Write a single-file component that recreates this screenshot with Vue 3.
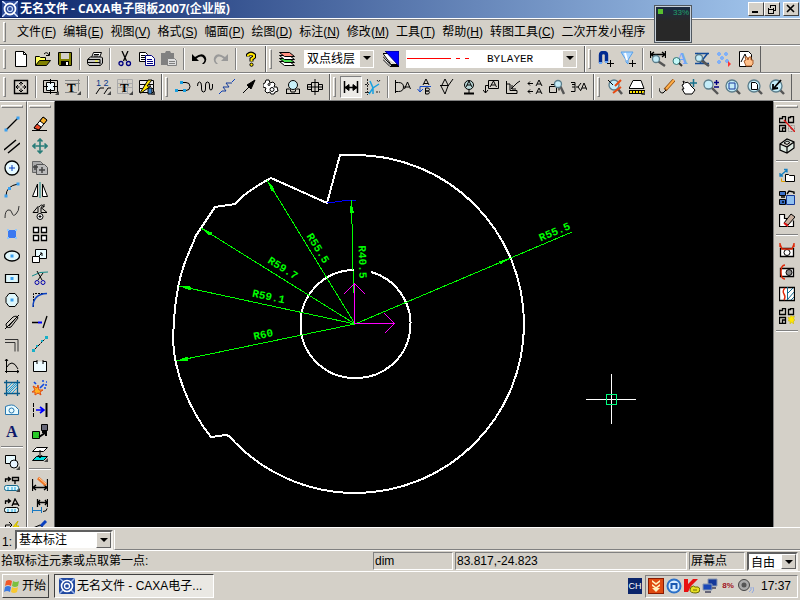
<script setup>
import { ref } from 'vue'

const menus = [
  ['文件', 'F'], ['编辑', 'E'], ['视图', 'V'], ['格式', 'S'], ['幅面', 'P'], ['绘图', 'D'],
  ['标注', 'N'], ['修改', 'M'], ['工具', 'T'], ['帮助', 'H'], ['转图工具', 'C'], ['二次开发小程序', '']
]

const layer = ref('双点线层')
const lineType = ref('BYLAYER')
const dimMode = ref('基本标注')
const snap = ref('自由')

const lens = (x, y, r, inner = '') =>
  `<path d="M${x + r * 0.7} ${y + r * 0.7}L15 15" stroke="#555" stroke-width="2.4"/><circle cx="${x}" cy="${y}" r="${r}" fill="#c4ecf8" stroke="#5a7c8a" stroke-width="1.3"/>${inner}`
const corner = '<path d="M16 12v4h-4z" fill="#444" stroke="none"/>'
const spark = '<path d="M12 7.500l-1 2.500-2-1 1 3-1 1 2 0 0 3 1.500-2 2 2 0-3 1.500-1-1.500-1 1-3-2 1z" fill="#ffe600" stroke="#c8b400" stroke-width=".5"/>'
const boxes = '<path d="M.5 6.500v-4h3v-2h3v6zM.5 15.500v-6h6v6zM3.500 15v-3h3M9.500 6.500v-5h2v-1h3v6z" stroke-width="1.300"/>'
const letter = (t, x, y, s, c) =>
  `<text x="${x}" y="${y}" font-family="Liberation Serif, serif" font-weight="bold" font-size="${s}" fill="${c}" stroke="none">${t}</text>`

const icons = {
  'New': '<path d="M2.500.500h8l3 3v12h-11z" fill="#fff"/><path d="M10.500.500v3h3"/>',
  'Open': '<path d="M.5 14.500v-9h4l1 1h5v3" fill="#ffff60"/><path d="M.5 14.500l4-5h11l-4 5z" fill="#808000"/><path d="M9 3q3-3 5 1M14.500 1v3.500H11"/>',
  'Save': '<path d="M1.500 1.500h13v13h-12l-1-1z" fill="#808000"/><path d="M4 2h8v6H4z" fill="#d4d0c8" stroke="none"/><path d="M4 10h8v5H4z" fill="#000" stroke="none"/><path d="M9 11h2v3H9z" fill="#fff" stroke="none"/>',
  'Print': '<path d="M4.500 6.500l2-5h8l-2 5z" fill="#fff"/><path d="M7 3.500h5M6.500 5h5"/><path d="M.5 8.500l3-2.500h11l1 1v5l-2 2.500H2l-1.500-2z" fill="#c8c8c8"/><path d="M1 8.500h12v5M1 11.500h12"/><path d="M8 10h3" stroke="#ff0"/>',
  'Cut': '<path d="M5 0l4.500 10M11 0L6.500 10" stroke-width="1.3"/><circle cx="4" cy="12.500" r="2" stroke="#000080" stroke-width="1.3"/><circle cx="11.500" cy="12.500" r="2" stroke="#000080" stroke-width="1.3"/>',
  'Copy': '<path d="M.5 1.500h6l2 2v7h-8z" fill="#fff"/><path d="M2 4.500h4M2 6.500h4M2 8.500h4"/><path d="M6.500 4.500h6l3 3v7h-9z" fill="#fff" stroke="#000080"/><path d="M8 8.500h5M8 10.500h6M8 12.500h6" stroke="#000080"/>',
  'Paste': '<path d="M0 2h4l1-2h4l1 2h3v12H0z" fill="#808080" stroke="none"/><path d="M6.500 7.500h7l2 2v5h-9z" fill="#ddd" stroke="#808080"/><path d="M8 10.500h6M8 12.500h6" stroke="#808080"/>',
  'Undo': '<path d="M1 3v7h7L5.500 7.500Q10 4 12.500 7T11 13h2Q17 9 14 5T4 6z" fill="#000" stroke="none"/>',
  'Redo': '<path d="M15 3v7H8l2.500-2.500Q6 4 3.500 7T5 13H3Q-1 9 2 5t10 1z" fill="#999" stroke="none"/>',
  'Help': '<path d="M5 5.500V4Q8 1 11 4v2L8.500 8v2.500" stroke-width="4"/><path d="M5 5.200V4.200Q8 1.500 11 4.200V6L8.500 8v2.200" stroke="#ffe600" stroke-width="2"/><circle cx="8.500" cy="13.700" r="1.600" fill="#ffe600"/>',
  'Layers': '<path d="M.5 10.500h10l5 4h-10z" fill="#fff"/><path d="M.5 7.500h10l5 4h-10z" fill="#4ade50"/><path d="M.5 4.500h10l5 4h-10z" fill="#fff"/><path d="M.5 1.500h10l5 4h-10z" fill="#ff9080"/>',
  'Colour': '<path d="M0 2.500h8l8 11H8zM0 5.500l8 9h8M0 8.500l7 7h9" fill="#fff"/><path d="M2 0h14v15z" fill="#0000ff" stroke="#000080"/>',
  'Snap magnet': '<path d="M2.500 12V4Q2.500 1.500 5.500 1.500t3 2.500v7" stroke="#002a90" stroke-width="3.400"/><path d="M1 12h3M7 11h3" stroke="#6aa8f8" stroke-width="2"/><path d="M9 12.500h7M12.500 9v7"/>',
  'Filter point': '<path d="M1 1h12L8 9v4L6 11V9z" fill="#a8d4ff" stroke="#58a0e8"/><path d="M5 2l2 7" stroke="#fff" stroke-width="2"/><path d="M9 12.500h7M12.500 9v7"/>',
  'Find dimension': '<path d="M.5 0v7M15.500 0v7M1 3.500h14M4 1L1 3.500 4 6M12 1l3 2.500L12 6" stroke-width="1.300"/>' + lens(6, 8, 3.5),
  'Find text': letter('A', 4, 13, 16, '#70a8f8') + '<circle cx="4.500" cy="10" r="3.500" fill="#c4f8f8" stroke="#377"/><path d="M7 12l3 3" stroke="#333" stroke-width="2"/>',
  'Find hatch': '<path d="M1 2.500h14M3 2l10 12M14 2L6 12M1 12.500h14" stroke="#114a98" stroke-width="1.500"/>' + lens(5, 7, 3.5),
  'Snap set': '<path d="M1 3h4M3 1v4M8 3h4M10 1v4M4 7h4M6 5v4M1 11h4M3 9v4M9 10h4M11 8v4" stroke="#80b0f8" stroke-width="2.200"/><path d="M12 10l3 3-3 3z" fill="#f33" stroke="none"/>',
  'Pan sheet': '<path d="M1.500.500h9l3 3v12h-12z" fill="#fff"/><path d="M3 11l4-8 3 8"/><path d="M8 15l-2-5 2-1-1-3 2 0 1 3 1-3 2 0 0 3 2 0v4l-2 2z" fill="#ffc08a" stroke="#a85a28"/>',
  'Frame': '<path d="M1.500 1.500h13v13h-13z" stroke-width="1.400"/><path d="M8 3.500v3M8 9.500v3M3.500 8h3M9.500 8h3M6 5l2-2 2 2M6 11l2 2 2-2M5 6L3 8l2 2M11 6l2 2-2 2"/>',
  'Sheet size': '<path d="M.5 1.500h14v12H.5z"/><path d="M3.500 3.500h8v8h-8z" fill="#eefaff"/><path d="M7.500 0v5M7.500 10v5M0 7.500h5M10 7.500h5"/>' + corner,
  'Title block': '<path d="M0 1.500h15M0 4.500h15M0 13.500h12M13.500 0v12" stroke="#888"/>' + letter('T', 2, 13, 13, '#000') + corner,
  'Numbering': '<path d="M1 15l4-6h4M9 15l4-6h3"/><text x="1" y="7" font-family="Liberation Sans, sans-serif" font-size="9" fill="#0a3a8a" stroke="none">1 2</text>' + corner,
  'Table': '<path d="M.5.500h15v14H.5zM0 4.500h15M0 8.500h15M5.500 0v14M10.500 0v14" stroke="#aaa"/>' + letter('T', 3, 13, 13, '#000') + corner,
  'Part list': '<path d="M.5 1.500h14v4H.5zM.5 5.500h14v4H.5zM.5 9.500h14v4H.5z" fill="#eee"/><path d="M1 14L9 1h4L8 7h4L2 14z" fill="#ffe600"/><path d="M9 9h4v6H9z" fill="#3a80c8"/>' + corner,
  'Tangent': '<path d="M1 11.500h9M8 3.500h3q4 0 4 4t-4 4"/><path d="M0 10h3v3H0zM5 2h3v3H5zM8 10h3v3H8z" fill="#18a0e0" stroke="none"/>',
  'Wave': '<path d="M.5 7q0-4 2-4t2 4v3q0 3 2 3t2-3V6q0-3 2-3t2 3v3q0 2 1.500 2t1.500-3V5"/>',
  'Break': '<path d="M0 15l3-3M13 3l3-3" stroke="#0a40c0"/><path d="M3 12h4L4 8h6L7 4h6" stroke="#123a9a"/>',
  'Arrow': '<path d="M2 14l7-7"/><path d="M14 1L6 6l4 4z" fill="#000"/>',
  'Gear': '<path d="M3 1l3 0 1 3 3-1 2 2-1 3 3 0 1 4-3 1-1 2-3 0-1-2-3 1-2-2 1-3-3-1 0-3 2-1z" fill="#fff"/><circle cx="6" cy="5.500" r="1"/><circle cx="9" cy="10.500" r="2"/>',
  'Bore': '<circle cx="8" cy="6" r="4.500" fill="#c8f0fa"/><path d="M1.500 14v-4h3M14.500 14v-4h-3M1 14.500h14M5 10l1 3h4l1-3"/>',
  'Shaft': '<path d="M4.500 3.500h7v9h-7zM.5 5.500h4v5h-4zM11.500 5.500h4v5h-4zM8 0v16M0 8h16" fill="none"/>',
  'Dimension': '<path d="M1.500 2v12M14.500 2v12" stroke-width="1.500"/><path d="M2 8.500h12" stroke-width="1.500"/><path d="M2 8.500l4-3v6zM14 8.500l-4-3v6z" fill="#000"/>',
  'Coordinates': '<path d="M2.500 0v16M0 13.500h5M0 5.500h4M11 13h4M12 1l1.500 2L15 1" stroke="#222" stroke-dasharray="2 1"/><path d="M4 15l4-6 6-4M5 2l3 7v6" stroke="#18a0e0" stroke-width="1.500"/>',
  'Datum': '<path d="M.5 3.500h3q5 0 5 4.500t-5 4.500h-3zM.5 1v13M9 8h2M9.500 10l3-7 3 7M10.500 8h4"/>',
  'Leader': '<path d="M6 6l3-6 3 6M7 4.500h4M8.500 9v6h3q2-2 0-3h-3h3q2-2 0-3z"/><path d="M14 7.500H3v5M.5 10L3 13l3-3" stroke="#144ac8"/>',
  'Roughness': '<path d="M1 6.500h9M2 7l4 8 3-8 5-7M3 6l3-6 3 6"/>',
  'Surface mark': '<circle cx="8" cy="6" r="4.500" fill="#b8d8d8"/><path d="M5 8l3-6 3 6M6 6h4M8 11v3"/><path d="M3 14.500h10" stroke-width="2"/>',
  'Tolerance': '<path d="M5.500 1.500h10v8h-10z"/><path d="M7 8l3.500-6 3 6M8 6h4M2.500 14V6.500h3M0 11l2.500 3L5 11"/>',
  'Weld': '<path d="M1.500 2v12.500H12v-3H5V5H1.500M6 10l6-6 3-2M7 10V6M7 10h4"/>',
  'Section mark': '<path d="M1 4.500h5M1 4.500l2-2M1 4.500l2 2M1 12.500h5M1 12.500l2-2M1 12.500l2 2M9 7l3-6 3 6M10 5h4M9 15l3-6 3 6M10 13h4"/>',
  'Detail': '<path d="M.5 7.500h7v6h-7zM2 5.500h8v6"/>' + lens(9, 5, 3.5),
  'Fit': '<path d="M0 3.500h4v9H0M4 5.500H1M4 8H1M5 8h3M10 4L7 8l3 4M10 11l3-7 3 7M11 9h4"/>',
  'Zoom edit': lens(7, 6, 5) + '<path d="M14 1L8 7M6 14l8-6" stroke="#e84a10" stroke-width="2"/><path d="M1 1l5 5"/>',
  'Erase all': '<path d="M0 9.500l4-8h8l3 8z" fill="#fff"/><path d="M0 13h16" stroke-width="4"/><path d="M1 13h14" stroke="#ffe600" stroke-width="2" stroke-dasharray="2 1"/>' + corner,
  'Redraw': '<path d="M15 1L6 11" stroke="#8a4a10" stroke-width="3.500"/><path d="M15 1L7 10" stroke="#ffae48" stroke-width="2"/><path d="M0 9q0 5 4 5l3-3"/>',
  'Pan': '<path d="M4 15l-3-5 2 0-2-4 2-1-1-3 3 2 1-1 3 2 1 2 2 2 2 2-3 4z" fill="#fff"/><path d="M12.500 0v8M9 4h7" stroke="#18708c" stroke-width="1.500"/>',
  'Zoom in out': lens(5.5, 5.5, 4.5) + '<path d="M11 3.500h5M13.500 1v5M11 8h5" stroke="#000080" stroke-width="1.400"/>',
  'Zoom window': lens(7, 7, 6, '<path d="M4 4h6v6H4z" stroke="#14389a"/>'),
  'Zoom all': lens(7, 7, 6, '<path d="M4.500 3.500h4l2 2v5h-6z" fill="#fff"/>'),
  'Zoom back': lens(7, 7, 6, '<path d="M4 5v5l5-1M5 9l7-8" stroke-width="1.800"/>'),
  'Line': '<path d="M2 14L14 2" stroke-width="1.300"/><path d="M.5 12.500h3v3h-3zM12.500.500h3v3h-3z" fill="#3aa0f0" stroke="none"/>',
  'Parallel': '<path d="M0 12L12 2M4 15L16 5" stroke-width="1.500"/>',
  'Circle': '<circle cx="8" cy="8" r="7" fill="#e8fbff" stroke-width="1.300"/><path d="M5 8h6M8 5v6" stroke="#0a40c0"/>',
  'Arc': '<path d="M2 14Q2 4 14 2"/><path d="M.5 12.500h3v3h-3zM4 5h3v3H4zM12.500.500h3v3h-3z" fill="#3aa0f0" stroke="none"/>',
  'Spline': '<path d="M1 14q0-7 3-8t4 3 4 1 3-8" stroke="#333"/>',
  'Point': '<path d="M4 4h8v8H4z" fill="#3a78f0" stroke="none"/><path d="M3 3h2v2H3zM11 3h2v2h-2zM3 11h2v2H3zM11 11h2v2h-2z" fill="#90c8ff" stroke="none"/>',
  'Ellipse': '<ellipse cx="8" cy="8" rx="7.500" ry="5" fill="#dff6fa" stroke-width="1.300"/><path d="M6.500 6.500h3v3h-3z" fill="#3aa0f0" stroke="none"/>',
  'Rectangle': '<path d="M1.500 4.500h13v8h-13z" fill="#dff6fa" stroke-width="1.200"/><path d="M6.500 7h3v3h-3z" fill="#3aa0f0" stroke="none"/>',
  'Polygon': '<path d="M5 1.500h6l3 4v5l-3 4H5l-3-4v-5z" fill="#dff6fa"/><path d="M6.500 6.500h3v3h-3z" fill="#3aa0f0" stroke="none"/>',
  'Centre line': '<path d="M2 10L9 3q4-2 5 1L7 13q-5 2-5-3zM1 15L15 1M5 12l7-8"/>',
  'Contour': '<path d="M1 3.500h13v12M1 6.500h10v9" stroke="#333"/>',
  'Formula': '<path d="M2.500 1v14M1 13.500h14M1 3l1.500-2L4 3M13 12l2 1.500L13 15M3 9q2-4 5-4t6 6"/>',
  'Hatch': '<path d="M2.500 0v16M13.500 0v16M0 2.500h16M0 13.500h16" stroke="#0a5a88" stroke-width="1.300"/><path d="M3 8l5-5M3 13L13 3M8 13l5-5M3 11l8-8M5 13l8-8" stroke="#18a0e0"/>',
  'Block': '<path d="M1.500 4.500q7-3 10 0l3 3v5h-13z" fill="#e8fbff" stroke="#2a78b0"/><circle cx="7.500" cy="8.500" r="2.500" stroke="#2a78b0"/>',
  'Text': letter('A', 2, 13, 16, '#101a6a'),
  'Block insert': '<path d="M1.500 1.500h10v8h-10z" fill="#e8fbff"/><circle cx="10" cy="10" r="4" fill="#e8f4ff"/>' + corner,
  'Update part': '<path d="M1.500 6V3h5M4 1l2.500 2L4 5M8.500 1.500h6v3h-6zM11 5v3" stroke-width="1.300"/><rect x=".5" y="9.500" width="14" height="5" rx="2" fill="#dff6fa" stroke="#14688c"/><path d="M4 11v3M8 11v3M11 11v3" stroke="#18a0e0"/>' + corner,
  'Update text': '<path d="M1.500 6V3h5M4 1l2.500 2L4 5M8 8l3-7 4 7M9 6h5" stroke-width="1.300"/><rect x=".5" y="9.500" width="14" height="5" rx="2" fill="#dff6fa"/><path d="M4 11v3M8 11v3M11 11v3" stroke="#18a0e0"/>',
  'Update quick': '<path d="M1.500 8V5h5M5 2l3 3-3 3"/><path d="M14 1l-5 6h3l-3 6 6-7h-3z" fill="#ffe600" stroke="#c8b400"/>',
  'Erase': '<path d="M0 14.500h15"/><path d="M2 12L11 1l4 3-8 10z" fill="#fff"/><path d="M2 12l3-4 4 3-2 3z" fill="#f04a28"/><path d="M8 5l4 3 3-4-4-3z" fill="#f8b028"/>',
  'Move': '<path d="M8 1v14M1 8h14M5.500 3.500L8 1l2.500 2.500M5.500 12.500L8 15l2.500-2.500M3.500 5.500L1 8l2.500 2.500M12.500 5.500L15 8l-2.500 2.500" stroke="#287c78" stroke-width="1.600"/>',
  'Copy shape': '<path d="M.5 1.500h8l3 3v8H.5z" fill="#aaa" stroke="#666"/><path d="M4.500 4.500h8l3 3v7h-11z" fill="#bbb" stroke="#555"/><path d="M7 10h6M10 7v6M3 5v5M1 7h5" stroke="#444" stroke-width="1.500"/>',
  'Mirror': '<path d="M5.500 2v12.500h-5zM10.500 2v12.500h5z" fill="#fff"/><path d="M8 0v16" stroke="#188"/>',
  'Rotate': '<path d="M1 8.500l5-6v6zM9 8.500v-5l6 5zM7 3q3-4 5 0M9 3h3V0"/><circle cx="8" cy="12.500" r="3" fill="#fff"/><path d="M8 11v3M6.500 12.500h3"/>',
  'Array': '<path d="M1.500 1.500h5v5h-5zM9.500 1.500h5v5h-5zM1.500 9.500h5v5h-5zM9.500 9.500h5v5h-5z" fill="#fff" stroke-width="1.300"/>',
  'Scale': '<path d="M3.500 1.500h11v9h-11z" fill="#e8fbff"/><path d="M.5 8.500h7v6h-7z" fill="#fff"/><path d="M10 5l-3 3M8 5h2v3"/>',
  'Trim': '<path d="M0 6q8-5 16-4" stroke="#188"/><path d="M5 1l5 9M11 3l-5 7"/><circle cx="5" cy="12.500" r="2" stroke="#00a"/><circle cx="11" cy="12.500" r="2" stroke="#00a"/>',
  'Fillet': '<path d="M1.500 15V1.500H15" stroke-dasharray="2 1"/><path d="M1 15Q1 2 15 1.500" stroke="#0a40c0" stroke-width="1.400"/>',
  'Extend': '<path d="M0 8.500h6M11 14l4-12" stroke-width="1.300"/><path d="M6 8.500h4" stroke="#00f" stroke-width="2"/>',
  'Stretch': '<path d="M2 14L14 2" stroke-dasharray="4 1"/><path d="M0 13h3v3H0zM13 0h3v3h-3zM4 9h2v2H4zM9 4h2v2H9z" fill="#18b0c8" stroke="none"/>',
  'Break shape': '<path d="M5 3.500H1.500v10h13v-10H11M5 2v4M11 2v4" fill="#eefbff"/>',
  'Explode': '<path d="M6 5l-1 3-4-2 2 4-3 2 3 0 0 3 3-2 3 2-1-3 3-2-4 0z" fill="#ffb020" stroke="#e04a10"/><path d="M8 8l4-4M10 1h2M14 2h1M13 5h2M12 8h2M2 2l2 2" stroke="#1048e0" stroke-width="1.700"/>',
  'Align': '<path d="M1.500 1v14" stroke-dasharray="4 1"/><path d="M14.500 1v14" stroke-width="2"/><path d="M4 8h7M8 5l4 3-4 3" stroke="#00f" stroke-width="1.600"/>',
  'Match': '<path d="M.5 7.500h7v7h-7z" fill="#28c828"/><path d="M9.500.500h6v6h-6z" fill="#667"/><path d="M7 13l6-4M10 8h4v4" stroke-width="2"/>',
  'Flatten': '<path d="M4.500 1.500h11l-4 4h-11z" fill="#fff"/><path d="M4.500 10.500h11l-4 4h-11z" fill="#00e0e0"/><path d="M8 4v7M6 9l2 3 2-3"/>' + corner,
  'Edit dimension': '<path d="M.5 3v12M15.500 3v12M1 11.500h14M4 9l-3 2.500L4 14M12 9l3 2.500-3 2.500" stroke-width="1.300"/><path d="M6 2l8 7" stroke="#f07828" stroke-width="3"/><path d="M7 2l7 6" stroke="#ffd0a0"/>',
  'Dimension style': '<path d="M5.500 1v8M15.500 1v8M6 4.500h9M8 2L6 4.500 8 7M13 2l2 2.500L13 7" stroke-width="1.300"/><path d="M.5 9v6M9.500 9v6M1 12.500h8" stroke="#1878c0"/><path d="M11 13.500q4 0 4-3"/>',
  'Format brush': '<path d="M1 8l7-3 4 3-3 4z" fill="#aaa"/><path d="M9 6l5-5" stroke="#0a40c0" stroke-width="3"/>',
  'Library delete': boxes + '<path d="M9.500 9.500h6v6h-6zM12.500 9v7M9 12.500h7" stroke="#888" stroke-dasharray="1 1"/><path d="M5 4l11 12" stroke="#e01010" stroke-width="1.300"/>',
  'Library box': '<path d="M1 6l7-5 7 3v6l-7 5-7-3zM1 6l7 3 7-5M8 9v6" fill="#dce8e0" stroke-width="1.200"/><path d="M5 5l3-2 3 1.500-3 2z"/>',
  'Library extract': '<path d="M1 8L8 2M1 5v3h3M5 1.500h3v3" stroke="#1880c0" stroke-width="1.300"/><path d="M6.500 13.500v-7h3l1 1h5v6z" fill="#fff"/><path d="M6 13.500H2.500v-3" stroke="#e0a000"/>',
  'Library drive': '<path d="M.5 1.500h6v4h-6zM.5 9.500h6v5h-6z" fill="#3a70c8"/><path d="M7.500 5.500h8v9h-8z" fill="#90c0f0" stroke="#14389a"/><path d="M8 4l2-3 5 1v2M2 7h4M3 12h2" stroke-width="1.400"/>',
  'Library edit': '<path d="M.5 14.500v-12h5v4h2v8zM8.500 14.500h6v-6" fill="#fff" stroke-width="1.200"/><path d="M5 11l7-9 4 3-7 8z" fill="#c8b0a0"/><path d="M5 11l4 3" stroke="#e01010" stroke-width="2"/>',
  'View one': '<path d="M1.500 6.500h13v8h-13z" fill="#fff" stroke-width="1.300"/><circle cx="8" cy="10.500" r="3"/><path d="M1 2l2 5h10l2-5M1 1v4M15 1v4" stroke="#e02808" stroke-width="1.400"/>',
  'View two': '<path d="M1.500 4.500h13v8h-13z" fill="#fff" stroke-width="1.300"/><circle cx="10" cy="8.500" r="3" fill="#888"/><path d="M6 1Q2 1 2 8t4 7" stroke="#e02808" stroke-width="1.400"/>',
  'View three': '<path d="M.5 1.500h15v13H.5z" fill="#fff" stroke-width="1.300"/><path d="M9 7l5-5M9 13l6-7M12 14l3-3M8.500 1v13" stroke="#14688c"/><path d="M6 2Q3 5 5 8t0 6" stroke="#e02808" stroke-width="1.400"/>',
  'Quick build': boxes + spark
}

const topRows = [
  [
    { tools: ['New', 'Open', 'Save', '|', 'Print', '|', 'Cut', 'Copy', 'Paste', '|', 'Undo', 'Redo', '|', 'Help'] },
    { props: true },
    { tools: ['Snap magnet', 'Filter point', '|', 'Find dimension', 'Find text', 'Find hatch', 'Snap set', 'Pan sheet'] }
  ],
  [
    { tools: ['Frame', '|', 'Sheet size', 'Title block', '|', 'Numbering', 'Table', 'Part list'] },
    { tools: ['Tangent', 'Wave', 'Break', 'Arrow', 'Gear', 'Bore', 'Shaft'] },
    { tools: ['Dimension', 'Coordinates', '|', 'Datum', 'Leader', 'Roughness', 'Surface mark', 'Tolerance', 'Weld', 'Section mark', 'Detail', 'Fit'] },
    { tools: ['Zoom edit', 'Erase all', '|', 'Redraw', 'Pan', 'Zoom in out', 'Zoom window', 'Zoom all', 'Zoom back'] }
  ]
]
const leftCols = [
  ['Line', 'Parallel', 'Circle', 'Arc', 'Spline', 'Point', 'Ellipse', 'Rectangle', 'Polygon', 'Centre line', 'Contour', 'Formula', 'Hatch', 'Block', 'Text', '|', 'Block insert', 'Update part', 'Update text', 'Update quick'],
  ['Erase', 'Move', 'Copy shape', 'Mirror', 'Rotate', 'Array', 'Scale', 'Trim', 'Fillet', 'Extend', 'Stretch', 'Break shape', 'Explode', 'Align', 'Match', 'Flatten', '|', 'Edit dimension', 'Dimension style', 'Format brush']
]
const rightCol = ['Library delete', 'Library box', '|', 'Library extract', 'Library drive', 'Library edit', '|', 'View one', 'View two', 'View three', 'Quick build', '|']

// Radial dimensions: tip of the arrow, label position and label rotation
const hub = { x: 355, y: 324 }
const radials = [
  { text: 'R55.5', x: 267, y: 180, lx: 315, ly: 250, a: 58 },
  { text: 'R59.7', x: 201, y: 228, lx: 281, ly: 271, a: 32 },
  { text: 'R59.1', x: 179, y: 286, lx: 268, ly: 300, a: 12 },
  { text: 'R60', x: 176, y: 361, lx: 264, ly: 338, a: -12 }
]
const angleAt = (r) => (Math.atan2(r.y - hub.y, r.x - hub.x) * 180) / Math.PI
</script>

<template>
  <div class="app">
    <header class="title">
      <svg class="logo" viewBox="0 0 16 16">
        <rect width="16" height="16" fill="#2a4a98" />
        <path d="M0 0l5 4M16 0l-4 4M0 16l4-4M11 11l5 5" stroke="#d8e4ff" stroke-width="1.500" />
        <circle cx="8" cy="8" r="5.500" fill="none" stroke="#fff" stroke-width="1.800" />
        <circle cx="8" cy="8" r="2.500" fill="none" stroke="#cfe0ff" stroke-width="1.200" />
      </svg>
      <h1>无名文件 - CAXA电子图板2007(企业版)</h1>
      <div class="winbtns">
        <button aria-label="Minimize"><svg viewBox="0 0 12 10"><path d="M2 8h6" stroke-width="2" /></svg></button>
        <button aria-label="Restore"><svg viewBox="0 0 12 10"><path d="M4 1h6M4.500 1v3M9.500 1v5H7M2 5h6M2.500 4v5h5V4" /></svg></button>
        <button class="close" aria-label="Close"><svg viewBox="0 0 12 10"><path d="M2 1l7 7M9 1L2 8" stroke-width="1.600" shape-rendering="auto" /></svg></button>
      </div>
    </header>

    <nav class="menubar">
      <span class="grip"></span>
      <button v-for="[name, key] in menus" :key="name">{{ name }}<template v-if="key">(<u>{{ key }}</u>)</template></button>
    </nav>

    <div v-for="(row, r) in topRows" :key="r" class="toolrow">
      <div v-for="(panel, p) in row" :key="p" class="panel" role="toolbar">
        <span class="grip"></span>
        <template v-if="panel.props">
          <button class="tool" aria-label="Layers"><svg viewBox="0 0 16 16" v-html="icons['Layers']"></svg></button>
          <span class="combo flat layer">
            <select v-model="layer" aria-label="Layer"><option>双点线层</option></select><i></i>
          </span>
          <button class="tool" aria-label="Colour"><svg viewBox="0 0 16 16" v-html="icons['Colour']"></svg></button>
          <span class="combo flat ltype">
            <svg class="sample" viewBox="0 0 62 4"><path d="M0 2.500h44M49 2.500h4M58 2.500h4" stroke="#f00" /></svg>
            <select v-model="lineType" aria-label="Line type"><option>BYLAYER</option></select><i></i>
          </span>
        </template>
        <template v-for="(t, i) in panel.tools" v-else :key="i">
          <span v-if="t === '|'" class="sep"></span>
          <button v-else class="tool" :class="{ pressed: t === 'Dimension' }" :aria-label="t">
            <svg viewBox="0 0 16 16" v-html="icons[t]"></svg>
          </button>
        </template>
      </div>
    </div>

    <main class="work">
      <div v-for="(col, c) in leftCols" :key="c" class="side" role="toolbar">
        <span class="grip"></span>
        <template v-for="(t, i) in col" :key="i">
          <span v-if="t === '|'" class="sep"></span>
          <button v-else class="tool" :aria-label="t"><svg viewBox="0 0 16 16" v-html="icons[t]"></svg></button>
        </template>
      </div>

      <div class="canvas">
        <svg viewBox="55 101 718 426" shape-rendering="crispEdges">
          <g fill="none" stroke="#fff" stroke-width="2">
            <path d="M340 155H355A169 169 0 0 1 355 493A169 169 0 0 1 229 436L226 435L211 437C190 411 173 371 173 337C174 325 174 312 176 301C179 275 186 258 194 241L195 237L201 228L215 207L235 204C244 193 258 185 271 178L327 203Z" />
            <path d="M354 270A54 54 0 0 0 355 378A54 54 0 0 0 371 272" />
          </g>
          <path d="M327 203L346 200.500H356" fill="none" stroke="#00f" />
          <g stroke="#0f0" fill="#0f0">
            <g v-for="d in radials" :key="d.text">
              <path :d="`M${hub.x} ${hub.y}L${d.x} ${d.y}`" />
              <path d="M0 0L-12 2V-2Z" stroke="none" :transform="`translate(${d.x} ${d.y}) rotate(${angleAt(d)})`" />
              <text :transform="`translate(${d.lx} ${d.ly}) rotate(${d.a})`">{{ d.text }}</text>
            </g>
            <path d="M353.500 293L351.500 200M355 324L572 232" />
            <path d="M351 200l-1 13h4zM512 257.500l-12 7-1-3z" stroke="none" />
            <text transform="translate(359 262) rotate(88)">R40.5</text>
            <text transform="translate(556 235) rotate(-23)">R55.5</text>
          </g>
          <path d="M354.500 324V284M344 294L354.500 283.500L365 294M355 323.500H395M384 313L394.500 323.500L385 333" fill="none" stroke="#f0f" />
          <path d="M611.500 374v50M586 399.500h50" stroke="#fff" />
          <path d="M606.500 394.500h10v10h-10z" fill="none" stroke="#00ff80" />
        </svg>
      </div>

      <div class="side right" role="toolbar">
        <span class="grip"></span>
        <template v-for="(t, i) in rightCol" :key="i">
          <span v-if="t === '|'" class="sep"></span>
          <button v-else class="tool" :aria-label="t"><svg viewBox="0 0 16 16" v-html="icons[t]"></svg></button>
        </template>
      </div>
    </main>

    <div class="options">
      <label for="dimmode">1:</label>
      <span class="combo mode"><select id="dimmode" v-model="dimMode"><option>基本标注</option></select><i></i></span>
      <span class="rest"></span>
    </div>

    <div class="status">
      <span class="prompt">拾取标注元素或点取第一点:</span>
      <span class="cell cmd">dim</span>
      <span class="cell coord">83.817,-24.823</span>
      <span class="cell scr">屏幕点</span>
      <span class="combo snap"><select v-model="snap" aria-label="Snap"><option>自由</option></select><i></i></span>
    </div>

    <footer class="taskbar">
      <button class="start">
        <svg viewBox="0 0 16 16">
          <path d="M2 3q3-2 6 0l-1 5q-3-2-6 0z" fill="#f0582a" />
          <path d="M9 3q3 2 6 0l-1 5q-3 2-6 0z" fill="#7cc040" />
          <path d="M1 9q3-2 6 0l-1 5q-3-2-6 0z" fill="#3a78e0" />
          <path d="M8 9q3 2 6 0l-1 5q-3 2-6 0z" fill="#f8c830" />
        </svg>
        <span>开始</span>
      </button>
      <button class="task">
        <svg viewBox="0 0 16 16">
          <rect width="16" height="16" fill="#2048a0" />
          <path d="M0 0l5 4M16 0l-4 4M0 16l4-4M11 11l5 5" stroke="#9ab4e8" stroke-width="1.500" />
          <circle cx="8" cy="8" r="5.500" fill="none" stroke="#fff" stroke-width="1.600" />
          <circle cx="8" cy="8" r="2.500" fill="none" stroke="#fff" stroke-width="1.300" />
        </svg>
        <span>无名文件 - CAXA电子...</span>
      </button>
      <span class="lang">CH</span>
      <div class="tray">
        <svg viewBox="0 0 16 16">
          <rect x=".5" y=".5" width="15" height="15" fill="#e04a10" stroke="#8a1a00" />
          <path d="M4 2l4 3 4-3v2L8 7 4 4zM4 6l4 3 4-3v2l-4 3-4-3zM4 10h8l-4 4z" fill="#fff3c0" />
        </svg>
        <svg viewBox="0 0 16 16">
          <circle cx="8" cy="8" r="7.500" fill="#2a70c8" />
          <circle cx="8" cy="8" r="5.500" fill="#d8ecff" />
          <path d="M5.500 11V6h5v5" fill="none" stroke="#1a58b0" stroke-width="2" />
        </svg>
        <svg viewBox="0 0 16 16">
          <path d="M0 1h4v5l5-5h5L7 8l-3 6H0z" fill="#e81010" />
          <path d="M7 9q3-2 4 0 4-1 5 2 0 4-4 4-6 0-6-3z" fill="#e8e020" stroke="#6a6a00" />
          <path d="M9 12h4" stroke="#6a6a00" />
        </svg>
        <svg viewBox="0 0 16 16">
          <path d="M6 1h9v7H6z" fill="#14389a" stroke="#8a98b0" />
          <path d="M1 6h9v6H1z" fill="#1a48b8" stroke="#8a98b0" />
          <path d="M3 14h6M10 10h4" stroke="#667" stroke-width="2" />
        </svg>
        <span class="pct">8%</span>
        <svg viewBox="0 0 16 16">
          <circle cx="6" cy="7" r="5.500" fill="#aaa" stroke="#444" />
          <circle cx="6" cy="7" r="2.500" fill="#555" />
          <path d="M11 14q3-2 2-5M14 15q3-3 1-6" fill="none" stroke="#90a8e0" />
        </svg>
        <time>17:37</time>
      </div>
    </footer>

    <aside class="monitor"><span class="led"></span><span>33%</span></aside>
  </div>
</template>

<style>
body {
  overflow: hidden;
  background: #d4d0c8;
}
</style>

<style scoped>
.app {
  position: relative;
  display: flex;
  flex-direction: column;
  height: 100vh;
  background: #d4d0c8;
  color: #000;
  font-family: "Liberation Sans", "Noto Sans CJK SC", sans-serif;
  font-size: 12px;
  line-height: 16px;
}
.app * {
  box-sizing: border-box;
}
button {
  font: inherit;
  color: inherit;
  background: none;
  border: 0;
  padding: 0;
  white-space: nowrap;
}
svg {
  display: block;
}
.title {
  display: flex;
  align-items: center;
  gap: 2px;
  height: 18px;
  padding: 0 1px 0 2px;
  background: linear-gradient(90deg, #0a246a, #a6caf0);
  color: #fff;
}
.logo {
  width: 16px;
  height: 16px;
}
h1 {
  flex: 1;
  margin: 0;
  font-family: "Open Sans", "Noto Sans CJK SC", sans-serif;
  font-size: 12px;
  font-weight: bold;
  line-height: 16px;
  white-space: nowrap;
}
.winbtns {
  display: flex;
}
.winbtns button {
  width: 16px;
  height: 14px;
  padding: 1px;
  background: #d4d0c8;
  border: 1px solid;
  border-color: #fff #404040 #404040 #fff;
}
.winbtns .close {
  margin-left: 3px;
}
.winbtns svg {
  width: 12px;
  height: 10px;
  fill: none;
  stroke: #000;
  shape-rendering: crispEdges;
}
.menubar {
  display: flex;
  align-items: center;
  gap: 7px;
  height: 27px;
  border-top: 1px solid #fff;
  border-bottom: 1px solid #808080;
  box-shadow: inset 0 1px #808080;
}
.grip {
  flex: none;
  width: 3px;
  height: 20px;
  margin: 0 4px 0 3px;
  border: 1px solid;
  border-color: #fff #808080 #808080 #fff;
}
.toolrow {
  display: flex;
  height: 28px;
  border-top: 1px solid #fff;
  border-bottom: 1px solid #808080;
}
.panel {
  display: flex;
  align-items: center;
  padding-right: 3px;
  border-right: 1px solid #606060;
}
.panel + .panel {
  box-shadow: inset 1px 0 #fff;
}
.tool {
  display: flex;
  flex: none;
  align-items: center;
  justify-content: center;
  width: 22px;
  height: 22px;
}
.tool svg {
  width: 16px;
  height: 16px;
  fill: none;
  stroke: #000;
}
.pressed {
  background: #eceae6;
  border: 1px solid;
  border-color: #808080 #fff #fff #808080;
}
.sep {
  flex: none;
  width: 2px;
  height: 22px;
  margin: 0 3px;
  border-left: 1px solid #808080;
  border-right: 1px solid #fff;
}
.combo {
  position: relative;
  display: flex;
  height: 20px;
  background: #fff;
  border: 2px solid;
  border-color: #606060 #f4f2ee #f4f2ee #606060;
}
.combo select {
  flex: 1;
  min-width: 0;
  padding: 0 16px 0 2px;
  font: inherit;
  color: #000;
  background: none;
  border: 0;
  appearance: none;
}
.combo i {
  position: absolute;
  top: 0;
  right: 0;
  bottom: 0;
  width: 15px;
  background: #d4d0c8;
  border: 1px solid;
  border-color: #fff #606060 #606060 #fff;
  pointer-events: none;
}
.combo i::after {
  content: "";
  display: block;
  margin: 5px auto 0;
  width: 0;
  border: 4px solid transparent;
  border-top-color: #000;
  border-bottom: 0;
}
.combo.flat {
  height: 18px;
  border: 1px solid #fff;
}
.combo.flat i {
  width: 13px;
  border: 0;
}
.layer {
  width: 70px;
  margin: 0 6px;
}
.ltype {
  width: 171px;
  margin: 0 4px;
  font-family: "Liberation Mono", monospace;
  font-size: 11px;
}
.ltype select {
  padding-left: 80px;
}
.sample {
  position: absolute;
  left: 0;
  top: 5px;
  width: 62px;
  height: 4px;
  shape-rendering: crispEdges;
}
.work {
  display: flex;
  flex: 1;
  min-height: 0;
}
.side {
  display: flex;
  flex: none;
  flex-direction: column;
  align-items: center;
  width: 27px;
  padding: 3px 3px 0 0;
  overflow: hidden;
  border-right: 1px solid #606060;
  border-top: 1px solid #fff;
}
.side + .side {
  width: 28px;
  border-left: 1px solid #fff;
}
.side.right {
  padding-right: 0;
  border-left: 1px solid #808080;
  border-right: 0;
}
.side .grip {
  width: 22px;
  height: 3px;
  margin: 0 0 5px;
}
.side .sep {
  width: 22px;
  height: 2px;
  margin: 3px 0;
  border: 0;
  border-top: 1px solid #808080;
  border-bottom: 1px solid #fff;
}
.canvas {
  flex: 1;
  min-width: 0;
  background: #000;
}
.canvas svg {
  width: 100%;
  height: 100%;
}
.canvas text {
  font-family: "Liberation Mono", monospace;
  font-size: 11px;
  font-weight: bold;
  text-anchor: middle;
  stroke: none;
}
.options {
  display: flex;
  height: 24px;
  padding-top: 2px;
  border-top: 1px solid #fff;
  border-bottom: 1px solid #fff;
}
.options label {
  width: 15px;
  padding: 4px 0 0 2px;
}
.mode {
  width: 98px;
}
.rest {
  flex: 1;
  margin-left: 1px;
  border-left: 1px solid #fff;
  border-bottom: 1px solid #808080;
}
.status {
  display: flex;
  gap: 2px;
  align-items: stretch;
  height: 20px;
  padding: 1px 2px 1px 1px;
  line-height: 18px;
  white-space: nowrap;
}
.prompt {
  flex: 1;
}
.cell {
  padding-left: 1px;
  line-height: 16px;
  border: 1px solid;
  border-color: #808080 #fff #fff #808080;
}
.cmd {
  width: 80px;
}
.coord {
  width: 232px;
}
.scr {
  width: 56px;
}
.snap {
  width: 51px;
  height: 19px;
}
.taskbar {
  display: flex;
  align-items: center;
  height: 29px;
  padding: 0 2px;
  border-top: 1px solid #fff;
}
.start,
.task {
  display: flex;
  align-items: center;
  gap: 2px;
  height: 24px;
  padding: 0 1px;
  border: 1px solid;
  border-color: #fff #404040 #404040 #fff;
}
.start svg,
.task svg,
.tray svg {
  flex: none;
  width: 16px;
  height: 16px;
}
.start {
  width: 47px;
}
.task {
  width: 160px;
  margin: 0 auto 0 5px;
  padding: 0 4px;
  background: #eae8e3;
  border-color: #404040 #fff #fff #404040;
}
.lang {
  width: 14px;
  margin-right: 3px;
  background: #0a246a;
  color: #fff;
  font-size: 9px;
  text-align: center;
}
.tray {
  display: flex;
  align-items: center;
  gap: 2px;
  height: 23px;
  padding: 0 6px 0 2px;
  border: 1px solid;
  border-color: #808080 #fff #fff #808080;
}
.pct {
  width: 16px;
  color: #a01020;
  font-size: 8px;
  font-weight: bold;
  text-align: center;
}
.tray time {
  margin-left: 5px;
}
.monitor {
  position: absolute;
  top: 5px;
  right: 108px;
  display: flex;
  justify-content: space-between;
  width: 38px;
  height: 38px;
  padding: 2px 1px 0 2px;
  background: linear-gradient(#1c2c44, #282828 14px);
  border: 2px solid #c8d0d8;
  outline: 1px solid #505860;
  outline-offset: -1px;
  color: #20a068;
  font-size: 8px;
  line-height: 8px;
}
.led {
  width: 5px;
  height: 5px;
  background: #58c030;
}
</style>
